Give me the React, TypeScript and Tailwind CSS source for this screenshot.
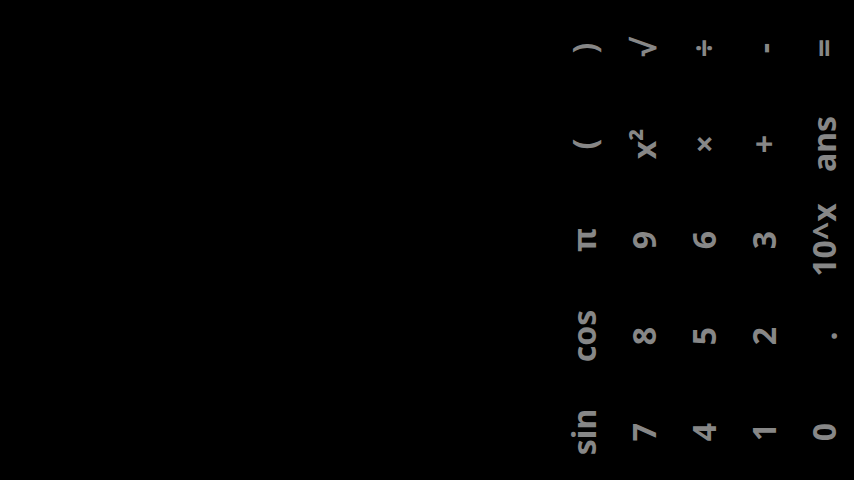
import React from 'react';

const columns: string[][] = [
  [')', '(', 'π', 'cos', 'sin'],
  ['√', 'x²', '9', '8', '7'],
  ['÷', '×', '6', '5', '4'],
  ['-', '+', '3', '2', '1'],
  ['=', 'ans', '10^x', '.', '0'],
];

export default function App() {
  return (
    <div className="w-[854px] h-[480px] bg-black flex justify-end overflow-hidden">
      {/* keypad, laid out sideways */}
      <div className="flex h-full">
        {columns.map((col, i) => (
          <div key={i} className="flex flex-col w-[60px]">
            {col.map((key) => (
              <button
                key={key}
                className="h-[96px] w-[60px] flex items-center justify-center"
              >
                <span
                  className="-rotate-90 whitespace-nowrap text-[32px] leading-none font-bold text-[#878787]"
                  style={{ fontFamily: '"Noto Sans", "Open Sans", sans-serif' }}
                >
                  {key}
                </span>
              </button>
            ))}
          </div>
        ))}
      </div>
    </div>
  );
}
